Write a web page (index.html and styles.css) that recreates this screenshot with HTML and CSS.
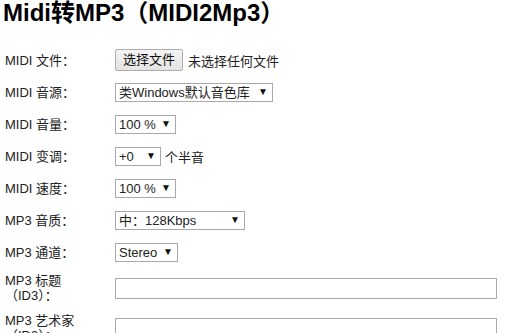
FILE: index.html
```html
<!doctype html>
<html lang="zh-CN">
<head>
  <meta charset="utf-8">
  <meta name="viewport" content="width=device-width,initial-scale=1">
  <title>Midi转MP3</title>
  <link rel="stylesheet" href="styles.css">
</head>
<body>
  <h1>Midi转MP3（MIDI2Mp3）</h1>
  <form class="form">
    <div class="row">
      <label class="key">MIDI 文件：</label>
      <div class="val">
        <label class="file"><input type="file" accept=".mid,.midi"><span class="btn">选择文件</span></label>
        <span class="hint">未选择任何文件</span>
      </div>
    </div>
    <div class="row">
      <label class="key">MIDI 音源：</label>
      <div class="val"><span class="pick"><select class="w-src"><option>类Windows默认音色库</option><option>钢琴音色库</option></select></span></div>
    </div>
    <div class="row">
      <label class="key">MIDI 音量：</label>
      <div class="val"><span class="pick"><select class="w-pct"><option>100 %</option><option>150 %</option><option>50 %</option></select></span></div>
    </div>
    <div class="row">
      <label class="key">MIDI 变调：</label>
      <div class="val"><span class="pick"><select class="w-key"><option>+0</option><option>+1</option><option>-1</option></select></span><span>个半音</span></div>
    </div>
    <div class="row">
      <label class="key">MIDI 速度：</label>
      <div class="val"><span class="pick"><select class="w-pct"><option>100 %</option><option>150 %</option><option>50 %</option></select></span></div>
    </div>
    <div class="row">
      <label class="key">MP3 音质：</label>
      <div class="val"><span class="pick"><select class="w-rate"><option>中：128Kbps</option><option>高：320Kbps</option><option>低：64Kbps</option></select></span></div>
    </div>
    <div class="row">
      <label class="key">MP3 通道：</label>
      <div class="val"><span class="pick"><select class="w-ch"><option>Stereo</option><option>Mono</option></select></span></div>
    </div>
    <div class="row">
      <label class="key">MP3 标题（ID3）：</label>
      <div class="val"><input class="text" type="text"></div>
    </div>
    <div class="row">
      <label class="key">MP3 艺术家（ID3）：</label>
      <div class="val"><input class="text" type="text"></div>
    </div>
  </form>
</body>
</html>
```

FILE: styles.css
```css
body{margin:0;padding:0 9px 0 5px;font-family:"Liberation Sans",Arial,"Noto Sans CJK SC",sans-serif;font-size:13px;color:#222;background:#fff}
h1{margin:0 0 0 -2px;font-size:24px;line-height:26px;font-weight:bold;color:#000}
.form{margin-top:18px}
.row{display:grid;grid-template-columns:110px 1fr;align-items:center;min-height:22px;padding:5px 0}
.key{line-height:15px;padding-right:5px}
.val{display:flex;align-items:center;gap:4px}
.file input{display:none}
.btn{display:inline-block;height:22px;line-height:20px;box-sizing:border-box;padding:0 7px;border:1px solid #adadad;border-radius:2px;background:linear-gradient(#f4f4f4,#e4e4e4);color:#111}
.hint{margin-left:1px}
.pick{position:relative;display:inline-block}
.pick select{-webkit-appearance:none;appearance:none;display:block;height:19px;box-sizing:border-box;padding:0 14px 0 3px;border:1px solid #a9a9a9;border-radius:0;background:#fff;font:inherit;color:#222}
.pick::after{content:"▼";position:absolute;right:5px;top:50%;transform:translateY(-55%);font-size:10px;color:#111;pointer-events:none}
.w-src{width:158px}
.w-pct{width:61px}
.w-key{width:46px}
.w-rate{width:130px}
.w-ch{width:63px}
.text{width:100%;height:21px;box-sizing:border-box;border:1px solid #a9a9a9;padding:1px 3px;font:inherit}
```
